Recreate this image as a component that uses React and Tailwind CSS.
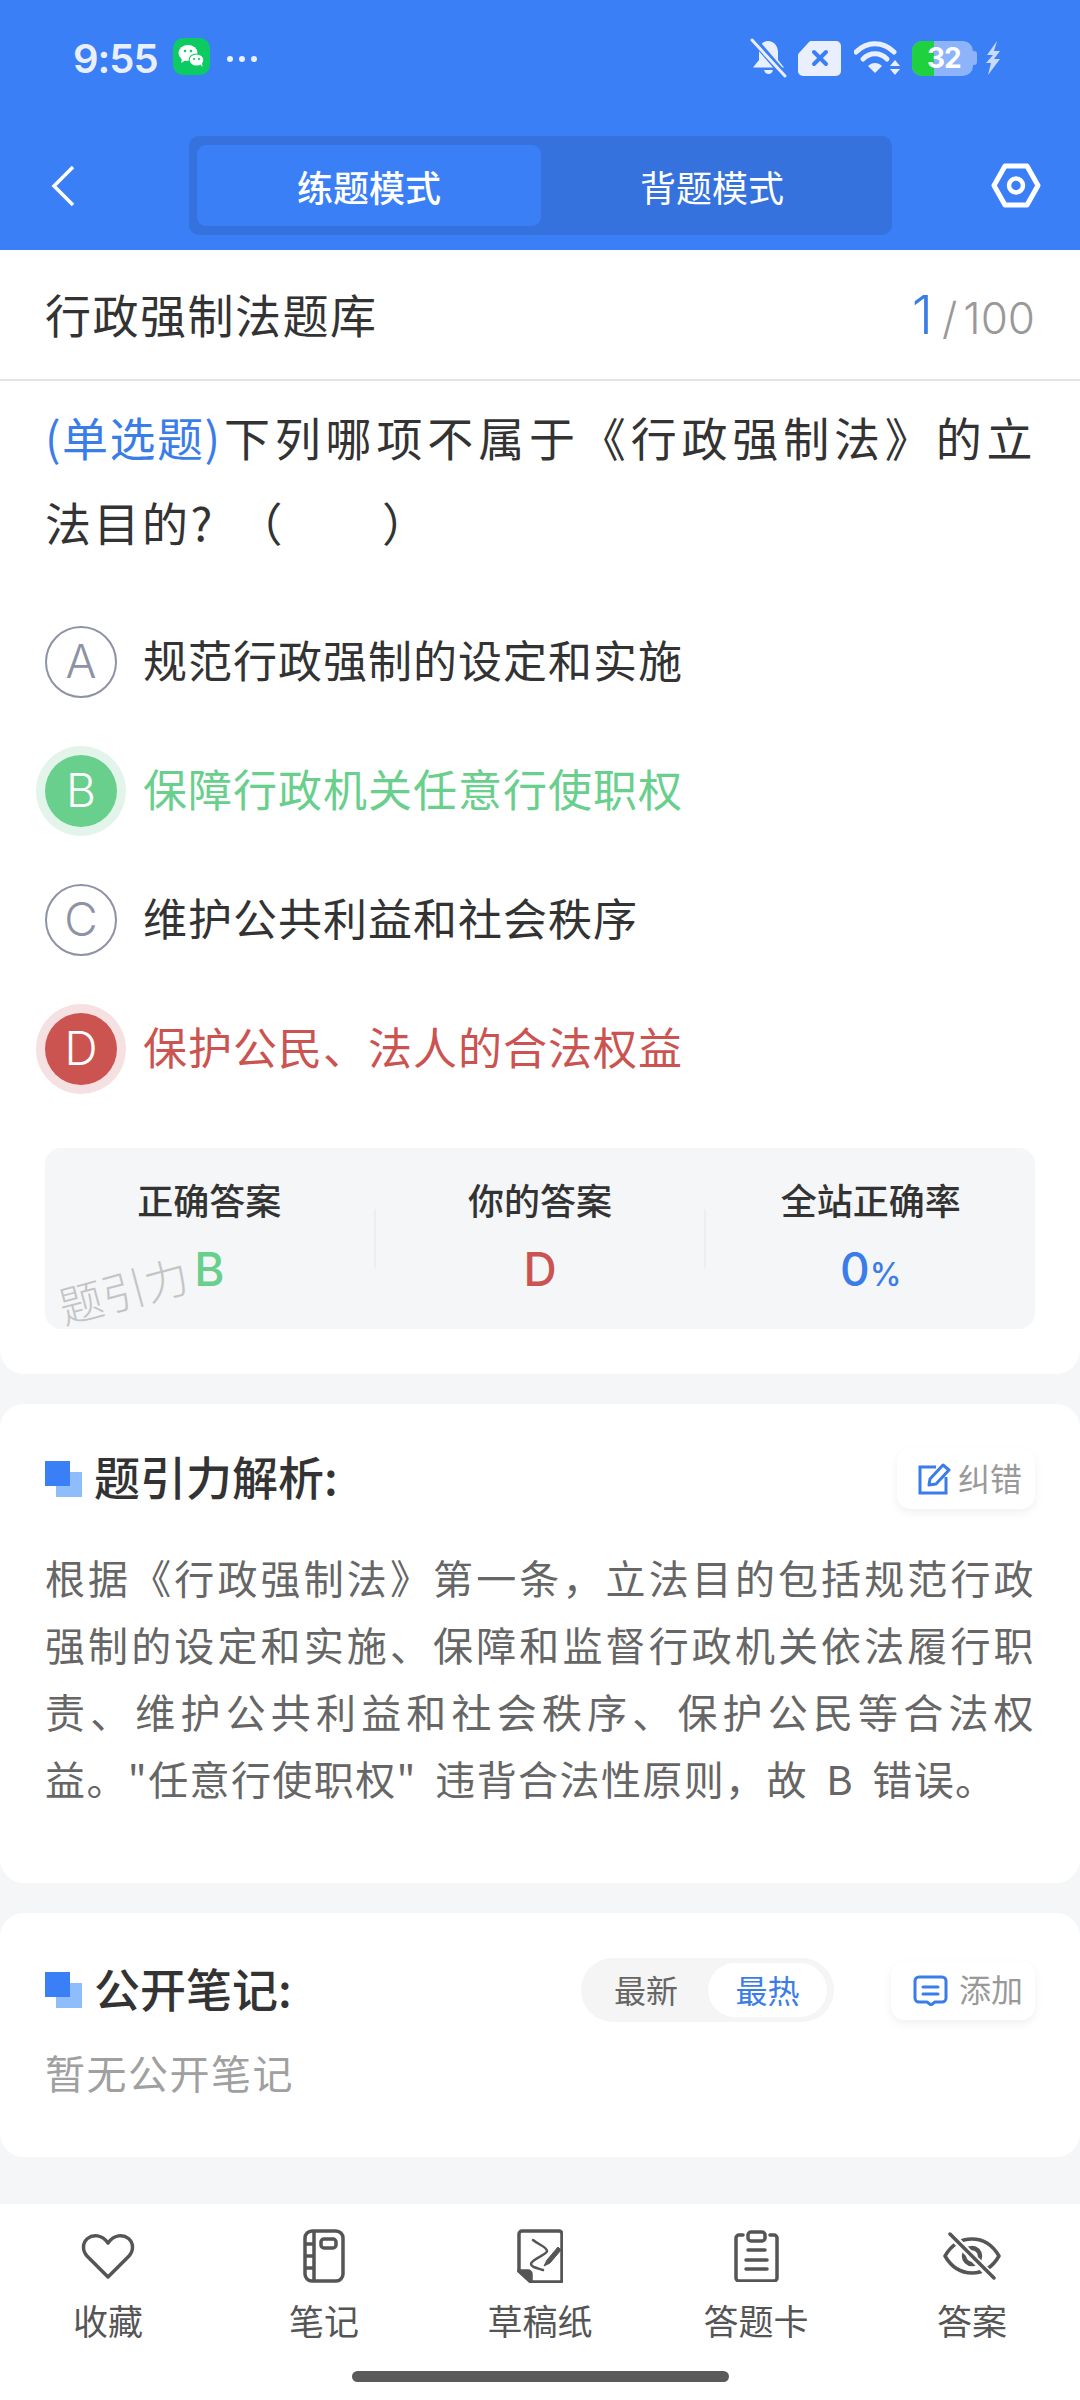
import React from "react";

const WeChatIcon = () => (
  <svg width="37" height="37" viewBox="0 0 37 37">
    <rect width="37" height="37" rx="10" fill="#0ccb62" />
    <ellipse cx="15" cy="15" rx="9.5" ry="8" fill="#fff" />
    <path d="M9 20l-1 5 5-3z" fill="#fff" />
    <ellipse cx="23.5" cy="22" rx="8" ry="6.6" fill="#0ccb62" />
    <ellipse cx="23.5" cy="22" rx="6.8" ry="5.6" fill="#fff" />
    <path d="M27 26l2.5 3-.5-4.500z" fill="#fff" />
    <circle cx="12" cy="13" r="1.300" fill="#0ccb62" />
    <circle cx="18" cy="13" r="1.300" fill="#0ccb62" />
    <circle cx="21" cy="21" r="1.100" fill="#0ccb62" />
    <circle cx="26" cy="21" r="1.100" fill="#0ccb62" />
  </svg>
);

const StatusIcons = () => (
  <div className="flex items-center">
    {/* muted bell */}
    <svg width="37" height="40" viewBox="0 0 37 40">
      <path d="M18 3C12 3 9 8 9 14v8l-6 7.500h31L28 22v-8C28 8 24 3 18 3z" fill="#e9effd" />
      <path d="M14 32h9c-1 3-2.500 4-4.500 4s-3.500-1-4.500-4z" fill="#e9effd" />
      <path d="M3 1l32 37" stroke="#3b7ff7" strokeWidth="7" />
      <path d="M2 2l33 36" stroke="#e9effd" strokeWidth="3" strokeLinecap="round" />
    </svg>
    {/* sim card */}
    <svg className="ml-[11px]" width="43" height="35" viewBox="0 0 43 35">
      <path d="M14 0h24a5 5 0 0 1 5 5v25a5 5 0 0 1-5 5H5a5 5 0 0 1-5-5V15a4 4 0 0 1 1-3L11 1a4 4 0 0 1 3-1z" fill="#e9effd" />
      <path d="M16 11l12 12M28 11L16 23" stroke="#3b7ff7" strokeWidth="4" strokeLinecap="round" />
    </svg>
    {/* wifi */}
    <svg className="ml-[13px]" width="46" height="34" viewBox="0 0 46 34">
      <path d="M2 11C13 0 29 0 40 11" fill="none" stroke="#e9effd" strokeWidth="5" strokeLinecap="round" />
      <path d="M9 18C16 11 26 11 33 18" fill="none" stroke="#e9effd" strokeWidth="5" strokeLinecap="round" />
      <path d="M14 25c4-4 10-4 14 0l-7 7z" fill="#e9effd" />
      <path d="M41 19l5 6H36zM41 34l5-6H36z" fill="#e9effd" />
    </svg>
    {/* battery */}
    <div className="relative ml-[12px] flex h-[35px] w-[61px] overflow-hidden rounded-[10px] bg-[#8db3fb]">
      <div className="h-full w-[22px] bg-[#1fd13f]" />
      <span className="absolute left-[15px] top-0 font-['Inter',sans-serif] text-[28px] leading-[35px] font-bold tracking-[-1px] text-white">32</span>
    </div>
    <div className="h-[14px] w-[4px] rounded-r-[3px] bg-[#8db3fb]" />
    {/* bolt */}
    <svg className="ml-[8px]" width="16" height="34" viewBox="0 0 16 34">
      <path d="M12 0L2 14H8L1 22H6L3 34L15 18H9L15 10H9z" fill="#c9dafc" />
    </svg>
  </div>
);

const SectionIcon = () => (
  <div className="relative h-[36px] w-[37px] shrink-0">
    <div className="absolute left-[11px] top-[11px] h-[25px] w-[26px] bg-[#8fbcfb]" />
    <div className="absolute left-0 top-0 h-[25px] w-[25px] bg-[#3b7ff7]" />
  </div>
);

const EditIcon = () => (
  <svg width="33" height="32" viewBox="0 0 33 32" fill="none" stroke="#3b7de8" strokeWidth="3">
    <path d="M18 4H2v26h26V14" />
    <path d="M12 16L25 2l6 5-13 14-7 1z" strokeLinejoin="round" />
  </svg>
);

const CommentIcon = () => (
  <svg width="35" height="31" viewBox="0 0 35 31" fill="none" stroke="#3b7de8" strokeWidth="3">
    <path d="M6 2h23a4 4 0 0 1 4 4v17a4 4 0 0 1-4 4h-7l-4 3-4-3H6a4 4 0 0 1-4-4V6a4 4 0 0 1 4-4z" strokeLinejoin="round" />
    <path d="M10 12h15M10 19h15" strokeLinecap="round" />
  </svg>
);

const HeartIcon = () => (
  <svg width="54" height="47" viewBox="0 0 54 47" fill="none" stroke="#555" strokeWidth="3.500" strokeLinejoin="round">
    <path d="M27 44L6 23C1 17.500 1.500 9.500 6.500 5.500C12 1 21 1.500 27 10C33 1.500 42 1 47.500 5.500C52.500 9.500 53 17.500 48 23Z" />
  </svg>
);

const NoteIcon = () => (
  <svg width="42" height="54" viewBox="0 0 42 54" fill="none" stroke="#555" strokeWidth="3.500">
    <rect x="2" y="2" width="38" height="50" rx="7" />
    <path d="M11 2v50M2 15h9M2 27h9M2 39h9" />
    <rect x="18" y="10" width="15" height="9" rx="3" />
  </svg>
);

const SketchIcon = () => (
  <svg width="46" height="54" viewBox="0 0 46 54" fill="none" stroke="#555" strokeWidth="3.500">
    <path d="M2 42V5a3 3 0 0 1 3-3h37a3 3 0 0 1 3 3v46a2 2 0 0 1-2 2H14z" strokeLinejoin="round" />
    <path d="M2 42h9a3 3 0 0 1 3 3v8z" fill="#555" strokeLinejoin="round" />
    <path d="M16 11C22 16 30 18 30 22C30 26 14 30 14 35C14 38 20 39 26 41" strokeWidth="2.500" strokeLinecap="round" />
    <path d="M41 18L30 31l-3 6 6-3 11-13z" fill="#555" strokeWidth="1" />
  </svg>
);

const ClipboardIcon = () => (
  <svg width="45" height="52" viewBox="0 0 45 52" fill="none" stroke="#555" strokeWidth="3.500" strokeLinecap="round">
    <path d="M9 5H5a3 3 0 0 0-3 3v40a3 3 0 0 0 3 3h35a3 3 0 0 0 3-3V8a3 3 0 0 0-3-3h-4" />
    <rect x="14" y="2" width="17" height="9" rx="3" />
    <path d="M14 20h17M12 30h21M12 39h21" />
  </svg>
);

const EyeOffIcon = () => (
  <svg width="58" height="48" viewBox="0 0 58 48" fill="none" stroke="#555" strokeWidth="3.500" strokeLinecap="round">
    <path d="M2 24C9 12 18 7 29 7C40 7 49 12 56 24C49 36 40 41 29 41C18 41 9 36 2 24Z" strokeLinejoin="round" />
    <circle cx="29" cy="24" r="8" strokeWidth="4.500" />
    <path d="M7 2l44 45" stroke="#fff" strokeWidth="8" strokeLinecap="butt" />
    <path d="M7 2l44 44" strokeWidth="3.500" />
  </svg>
);

const options = [
  { letter: "A", text: "规范行政强制的设定和实施", state: "normal" },
  { letter: "B", text: "保障行政机关任意行使职权", state: "right" },
  { letter: "C", text: "维护公共利益和社会秩序", state: "normal" },
  { letter: "D", text: "保护公民、法人的合法权益", state: "wrong" },
];

const tabs = [
  { label: "收藏", icon: <HeartIcon /> },
  { label: "笔记", icon: <NoteIcon /> },
  { label: "草稿纸", icon: <SketchIcon /> },
  { label: "答题卡", icon: <ClipboardIcon /> },
  { label: "答案", icon: <EyeOffIcon /> },
];

export default function App() {
  return (
    <div className="flex h-[2400px] w-[1080px] flex-col overflow-hidden bg-[#f5f6f8] font-['Noto_Sans_CJK_SC',sans-serif]">
      {/* Header */}
      <div className="h-[250px] shrink-0 bg-[#3b7ff7]">
        <div className="flex h-[136px] items-start pl-[73px] pt-[38px]">
          <span className="w-[100px] font-['Inter',sans-serif] text-[40px] leading-[42px] font-semibold tracking-[-1px] text-[#e9effd]">9:55</span>
          <WeChatIcon />
          <div className="ml-[17px] mt-[18px] flex gap-[6px]">
            <div className="h-[6px] w-[6px] rounded-full bg-[#e9effd]" />
            <div className="h-[6px] w-[6px] rounded-full bg-[#e9effd]" />
            <div className="h-[6px] w-[6px] rounded-full bg-[#e9effd]" />
          </div>
          <div className="ml-auto pr-[79px]">
            <StatusIcons />
          </div>
        </div>
        <div className="flex h-[99px] items-center pl-[51px]">
          <svg width="24" height="42" viewBox="0 0 24 42" fill="none" stroke="#fff" strokeWidth="3.500">
            <path d="M22 2L3 21l19 19" />
          </svg>
          <div className="ml-[114px] flex h-[99px] w-[703px] rounded-[10px] bg-[#3672dd] p-[9px] pl-[8px]">
            <div className="flex h-[81px] w-[344px] items-center justify-center rounded-[9px] bg-[#3b7ff7] text-[36px] font-medium text-white">练题模式</div>
            <div className="flex h-[81px] flex-1 items-center justify-center text-[36px] text-white">背题模式</div>
          </div>
          <svg className="ml-[99px]" width="50" height="45" viewBox="0 0 50 45" fill="none" stroke="#fff" strokeWidth="5" strokeLinejoin="round">
            <path d="M14 3h22l11 19.500L36 42H14L3 22.500z" />
            <circle cx="25" cy="22.500" r="7" strokeWidth="4.500" />
          </svg>
        </div>
      </div>

      {/* Question card */}
      <div className="shrink-0 rounded-b-[24px] bg-white pb-[45px]">
        <div className="flex h-[131px] items-center justify-between border-b-2 border-[#e3e3e3] px-[45px]">
          <span className="pb-[2px] text-[46px] tracking-[1.5px] text-[#333]">行政强制法题库</span>
          <span className="flex items-baseline font-['Inter',sans-serif] font-light">
            <span className="text-[54px] text-[#3b7de8]">1</span>
            <span className="ml-[9px] text-[44px] text-[#999]">/</span>
            <span className="ml-[6px] text-[44px] text-[#999]">100</span>
          </span>
        </div>
        <p className="px-[45px] pt-[13px] text-justify text-[46px] leading-[85px] tracking-[2.5px] text-[#333]">
          <span className="inline-block tracking-[1.5px] text-[#3b7de8]">(单选题)</span>下列哪项不属于《行政强制法》的立法目的? <span className="ml-[9px]">（　　）</span>
        </p>
        <div className="mt-[33px] flex flex-col">
          {options.map((o) => (
            <div key={o.letter} className="flex h-[129px] items-center gap-[26px] px-[45px]">
              {o.state === "normal" && (
                <div className="flex h-[72px] w-[72px] items-center justify-center rounded-full border-2 border-[#8e92a6] font-['Inter',sans-serif] text-[46px] font-light text-[#8e92a6]">{o.letter}</div>
              )}
              {o.state === "right" && (
                <div className="flex h-[72px] w-[72px] items-center justify-center rounded-full bg-[#68cf8c] font-['Inter',sans-serif] text-[46px] font-light text-white ring-[9px] ring-[#e3f5ea]">{o.letter}</div>
              )}
              {o.state === "wrong" && (
                <div className="flex h-[72px] w-[72px] items-center justify-center rounded-full bg-[#cb5350] font-['Inter',sans-serif] text-[46px] font-light text-white ring-[9px] ring-[#f5e1e1]">{o.letter}</div>
              )}
              {o.state === "normal" && <span className="pb-[6px] text-[44px] tracking-[1px] text-[#333]">{o.text}</span>}
              {o.state === "right" && <span className="pb-[6px] text-[44px] tracking-[1px] text-[#68cf8c]">{o.text}</span>}
              {o.state === "wrong" && <span className="pb-[6px] text-[44px] tracking-[1px] text-[#cb5350]">{o.text}</span>}
            </div>
          ))}
        </div>

        {/* Answer stats */}
        <div className="relative mx-[45px] mt-[35px] flex h-[181px] items-center rounded-[16px] bg-[#f4f6f8]">
          <div className="flex flex-1 flex-col items-center">
            <span className="text-[36px] leading-[38px] font-medium text-[#333]">正确答案</span>
            <span className="mt-[23px] font-['Inter',sans-serif] text-[46px] leading-[56px] font-medium text-[#68cf8c]">B</span>
          </div>
          <div className="h-[59px] w-[2px] bg-[#eceef1]" />
          <div className="flex flex-1 flex-col items-center">
            <span className="text-[36px] leading-[38px] font-medium text-[#333]">你的答案</span>
            <span className="mt-[23px] font-['Inter',sans-serif] text-[46px] leading-[56px] font-medium text-[#cb5350]">D</span>
          </div>
          <div className="h-[59px] w-[2px] bg-[#eceef1]" />
          <div className="flex flex-1 flex-col items-center">
            <span className="text-[36px] leading-[38px] font-medium text-[#333]">全站正确率</span>
            <span className="mt-[23px] font-['Inter',sans-serif] text-[46px] leading-[56px] font-medium text-[#3b7de8]">0<span className="text-[32px] leading-none">%</span></span>
          </div>
          <span className="absolute left-[12px] top-[116px] -rotate-[15deg] text-[44px] leading-[50px] font-light text-[#c4c4c4]">题引力</span>
        </div>
      </div>

      {/* Analysis */}
      <div className="mt-[30px] h-[479px] shrink-0 rounded-[24px] bg-white px-[45px] pt-[44px]">
        <div className="flex h-[61px] items-center">
          <SectionIcon />
          <span className="ml-[12px] pb-[6px] text-[46px] leading-[61px] font-medium text-[#333]">题引力解析:</span>
          <div className="ml-auto flex h-[61px] w-[138px] items-center gap-[7px] rounded-[14px] bg-white pl-[21px] text-[32px] text-[#999] shadow-[0_4px_10px_rgba(0,0,0,0.06)]">
            <EditIcon />
            <span className="pb-[4px]">纠错</span>
          </div>
        </div>
        <p className="mt-[35px] text-justify text-[40px] leading-[67px] tracking-[1.4px] [word-spacing:8px] text-[#666]">
          根据《行政强制法》第一条，立法目的包括规范行政强制的设定和实施、保障和监督行政机关依法履行职责、维护公共利益和社会秩序、保护公民等合法权益。"任意行使职权" 违背合法性原则，故 B 错误。
        </p>
      </div>

      {/* Public notes */}
      <div className="mt-[30px] h-[244px] shrink-0 rounded-[24px] bg-white px-[45px] pt-[45px]">
        <div className="flex h-[64px] items-center">
          <SectionIcon />
          <span className="ml-[12px] pb-[6px] text-[46px] font-medium text-[#333]">公开笔记:</span>
          <div className="ml-auto flex h-[64px] w-[253px] items-center rounded-full bg-[#f5f5f5] pl-[33px] pr-[7px]">
            <span className="pb-[3px] text-[32px] text-[#666]">最新</span>
            <span className="ml-auto flex h-[54px] w-[119px] items-center justify-center rounded-full bg-white pb-[3px] text-[32px] text-[#3b7de8]">最热</span>
          </div>
          <div className="ml-[57px] flex h-[59px] w-[144px] items-center gap-[11px] rounded-[14px] bg-white pl-[22px] text-[32px] text-[#999] shadow-[0_4px_10px_rgba(0,0,0,0.06)]">
            <CommentIcon />
            <span className="pb-[4px]">添加</span>
          </div>
        </div>
        <p className="mt-[22px] text-[40px] leading-[56px] tracking-[1.5px] text-[#a0a0a0]">暂无公开笔记</p>
      </div>

      {/* Bottom bar */}
      <div className="mt-auto shrink-0 bg-white pt-[25px]">
        <div className="grid grid-cols-5">
          {tabs.map((t) => (
            <div key={t.label} className="flex flex-col items-center">
              <div className="flex h-[54px] items-center justify-center">{t.icon}</div>
              <span className="mt-[14px] text-[35px] leading-[46px] text-[#555]">{t.label}</span>
            </div>
          ))}
        </div>
        <div className="mx-auto mb-[18px] mt-[28px] h-[11px] w-[377px] rounded-full bg-[#5a5a5a]" />
      </div>
    </div>
  );
}
